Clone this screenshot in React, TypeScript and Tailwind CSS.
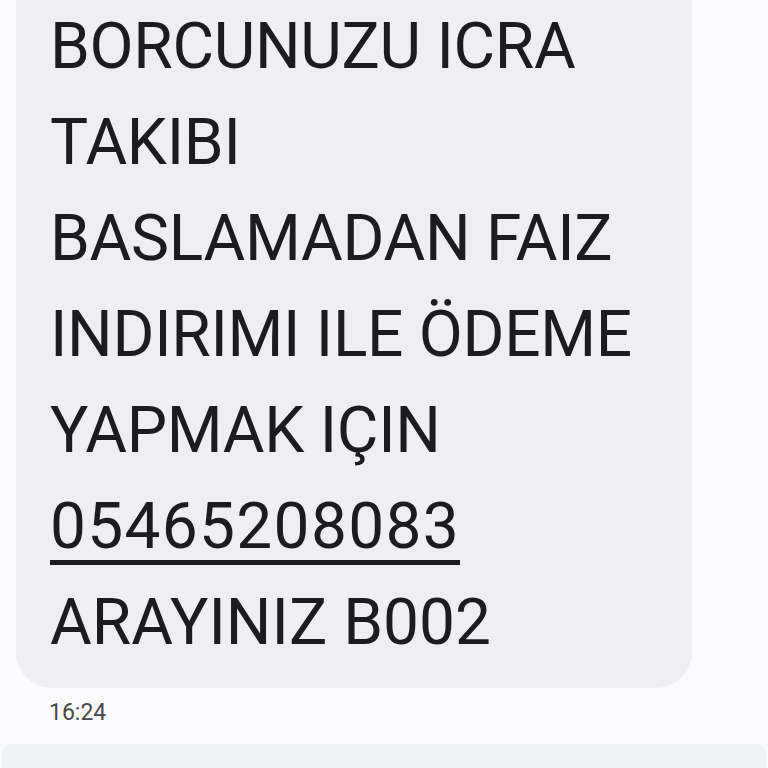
import React from "react";

const lines = [
  "BORCUNUZU ICRA",
  "TAKIBI",
  "BASLAMADAN FAIZ",
  "INDIRIMI ILE ÖDEME",
  "YAPMAK IÇIN",
];

export default function App() {
  return (
    <div className="w-[768px] h-[768px] overflow-hidden bg-[#fbfbfd] relative" style={{ fontFamily: "Roboto, sans-serif" }}>
      <div className="ml-[16px] w-[676px] mt-[-40px] h-[728px] bg-[#efeff2] rounded-[36px] pl-[34px] pt-[39px] flex flex-col text-[#1c1c1e] text-[64px] leading-[96px]">
        {lines.map((l) => (
          <div key={l} className="tracking-[-0.3px]">{l}</div>
        ))}
        <div>
          <span className="underline decoration-[5px] underline-offset-[12px] tracking-[1.3px]">05465208083</span>
        </div>
        <div>ARAYINIZ B002</div>
      </div>
      <div className="pl-[49px] pt-[8px] text-[23px] text-[#48484a]">16:24</div>
      <div className="absolute left-[2px] right-[2px] top-[744px] h-[40px] bg-[#eff1f5] rounded-t-[10px]" />
    </div>
  );
}
